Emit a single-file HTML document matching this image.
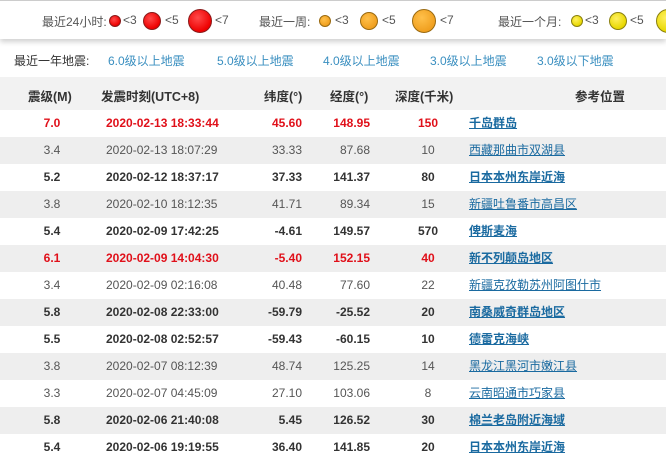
<!DOCTYPE html><html><head><meta charset="utf-8"><style>
body{margin:0;width:666px;height:463px;overflow:hidden;background:#fff;font-family:"Liberation Sans","Noto Sans CJK SC",sans-serif;font-size:12px;color:#555;position:relative}
.a{position:absolute;white-space:nowrap}
.top{position:absolute;left:0;top:0;width:666px;height:38px;background:#fff;box-shadow:0 3px 5px rgba(0,0,0,.18);border-top:1px solid #ccc}
.c{position:absolute;border-radius:50%;box-sizing:border-box}
.r{background:radial-gradient(circle at 40% 35%,#ff4a4a,#e00 70%);border:1px solid #8a1a1a}
.o{background:radial-gradient(circle at 40% 35%,#ffc04a,#f0a020 70%);border:1px solid #9a6a10}
.y{background:radial-gradient(circle at 40% 35%,#fff060,#e8d800 70%);border:1px solid #8a8010}
.lk{color:#3a8fc0}
.hd{position:absolute;left:0;top:77px;width:666px;height:33px;background:#f2f2f2;font-weight:bold;color:#333;font-size:12.5px}
.row{position:absolute;left:0;width:666px;height:27px;line-height:27px}
.row.g{background:#eee}
.row span{position:absolute}
.b{font-weight:bold;color:#333}
.red{font-weight:bold;color:#e0101a}
.loc{left:469px;color:#1a6aa0;text-decoration:underline;font-size:12px}
</style></head><body>
<div class="top"></div>
<div class="a" style="left:42px;top:13px">最近24小时:</div>
<div class="c r" style="left:109px;top:15px;width:12px;height:12px"></div><div class="a" style="left:123px;top:13px">&lt;3</div>
<div class="c r" style="left:143px;top:12px;width:18px;height:18px"></div><div class="a" style="left:165px;top:13px">&lt;5</div>
<div class="c r" style="left:188px;top:9px;width:24px;height:24px"></div><div class="a" style="left:215px;top:13px">&lt;7</div>
<div class="a" style="left:259px;top:13px">最近一周:</div>
<div class="c o" style="left:319px;top:15px;width:12px;height:12px"></div><div class="a" style="left:335px;top:13px">&lt;3</div>
<div class="c o" style="left:360px;top:12px;width:18px;height:18px"></div><div class="a" style="left:382px;top:13px">&lt;5</div>
<div class="c o" style="left:412px;top:9px;width:24px;height:24px"></div><div class="a" style="left:440px;top:13px">&lt;7</div>
<div class="a" style="left:498px;top:13px">最近一个月:</div>
<div class="c y" style="left:571px;top:15px;width:12px;height:12px"></div><div class="a" style="left:585px;top:13px">&lt;3</div>
<div class="c y" style="left:609px;top:12px;width:18px;height:18px"></div><div class="a" style="left:630px;top:13px">&lt;5</div>
<div class="c y" style="left:656px;top:9px;width:24px;height:24px"></div>
<div class="a" style="left:14px;top:52px;color:#333">最近一年地震:</div>
<div class="a lk" style="left:108px;top:52px">6.0级以上地震</div>
<div class="a lk" style="left:217px;top:52px">5.0级以上地震</div>
<div class="a lk" style="left:323px;top:52px">4.0级以上地震</div>
<div class="a lk" style="left:430px;top:52px">3.0级以上地震</div>
<div class="a lk" style="left:537px;top:52px">3.0级以下地震</div>
<div class="hd"><span class="a" style="left:28px;top:9px">震级(M)</span><span class="a" style="left:101px;top:9px">发震时刻(UTC+8)</span><span class="a" style="left:264px;top:9px">纬度(°)</span><span class="a" style="left:330px;top:9px">经度(°)</span><span class="a" style="left:395px;top:9px">深度(千米)</span><span class="a" style="left:575px;top:9px">参考位置</span></div>
<div id="t"></div>
<script>
var d=[["7.0","2020-02-13 18:33:44","45.60","148.95","150","千岛群岛","red"],
["3.4","2020-02-13 18:07:29","33.33","87.68","10","西藏那曲市双湖县",""],
["5.2","2020-02-12 18:37:17","37.33","141.37","80","日本本州东岸近海","b"],
["3.8","2020-02-10 18:12:35","41.71","89.34","15","新疆吐鲁番市高昌区",""],
["5.4","2020-02-09 17:42:25","-4.61","149.57","570","俾斯麦海","b"],
["6.1","2020-02-09 14:04:30","-5.40","152.15","40","新不列颠岛地区","red"],
["3.4","2020-02-09 02:16:08","40.48","77.60","22","新疆克孜勒苏州阿图什市",""],
["5.8","2020-02-08 22:33:00","-59.79","-25.52","20","南桑威奇群岛地区","b"],
["5.5","2020-02-08 02:52:57","-59.43","-60.15","10","德雷克海峡","b"],
["3.8","2020-02-07 08:12:39","48.74","125.25","14","黑龙江黑河市嫩江县",""],
["3.3","2020-02-07 04:45:09","27.10","103.06","8","云南昭通市巧家县",""],
["5.8","2020-02-06 21:40:08","5.45","126.52","30","棉兰老岛附近海域","b"],
["5.4","2020-02-06 19:19:55","36.40","141.85","20","日本本州东岸近海","b"]];
var h="";d.forEach(function(r,i){var c=r[6];h+='<div class="row'+(i%2?' g':'')+'" style="top:'+(110+i*27)+'px"><span class="'+c+'" style="left:0;width:104px;text-align:center">'+r[0]+'</span><span class="'+c+'" style="left:106px">'+r[1]+'</span><span class="'+c+'" style="right:364px">'+r[2]+'</span><span class="'+c+'" style="right:296px">'+r[3]+'</span><span class="'+c+'" style="left:398px;width:60px;text-align:center">'+r[4]+'</span><span class="loc'+(c?' b':'')+'" style="color:#1a6aa0">'+r[5]+'</span></div>'});
document.getElementById("t").innerHTML=h;
</script>
</body></html>
